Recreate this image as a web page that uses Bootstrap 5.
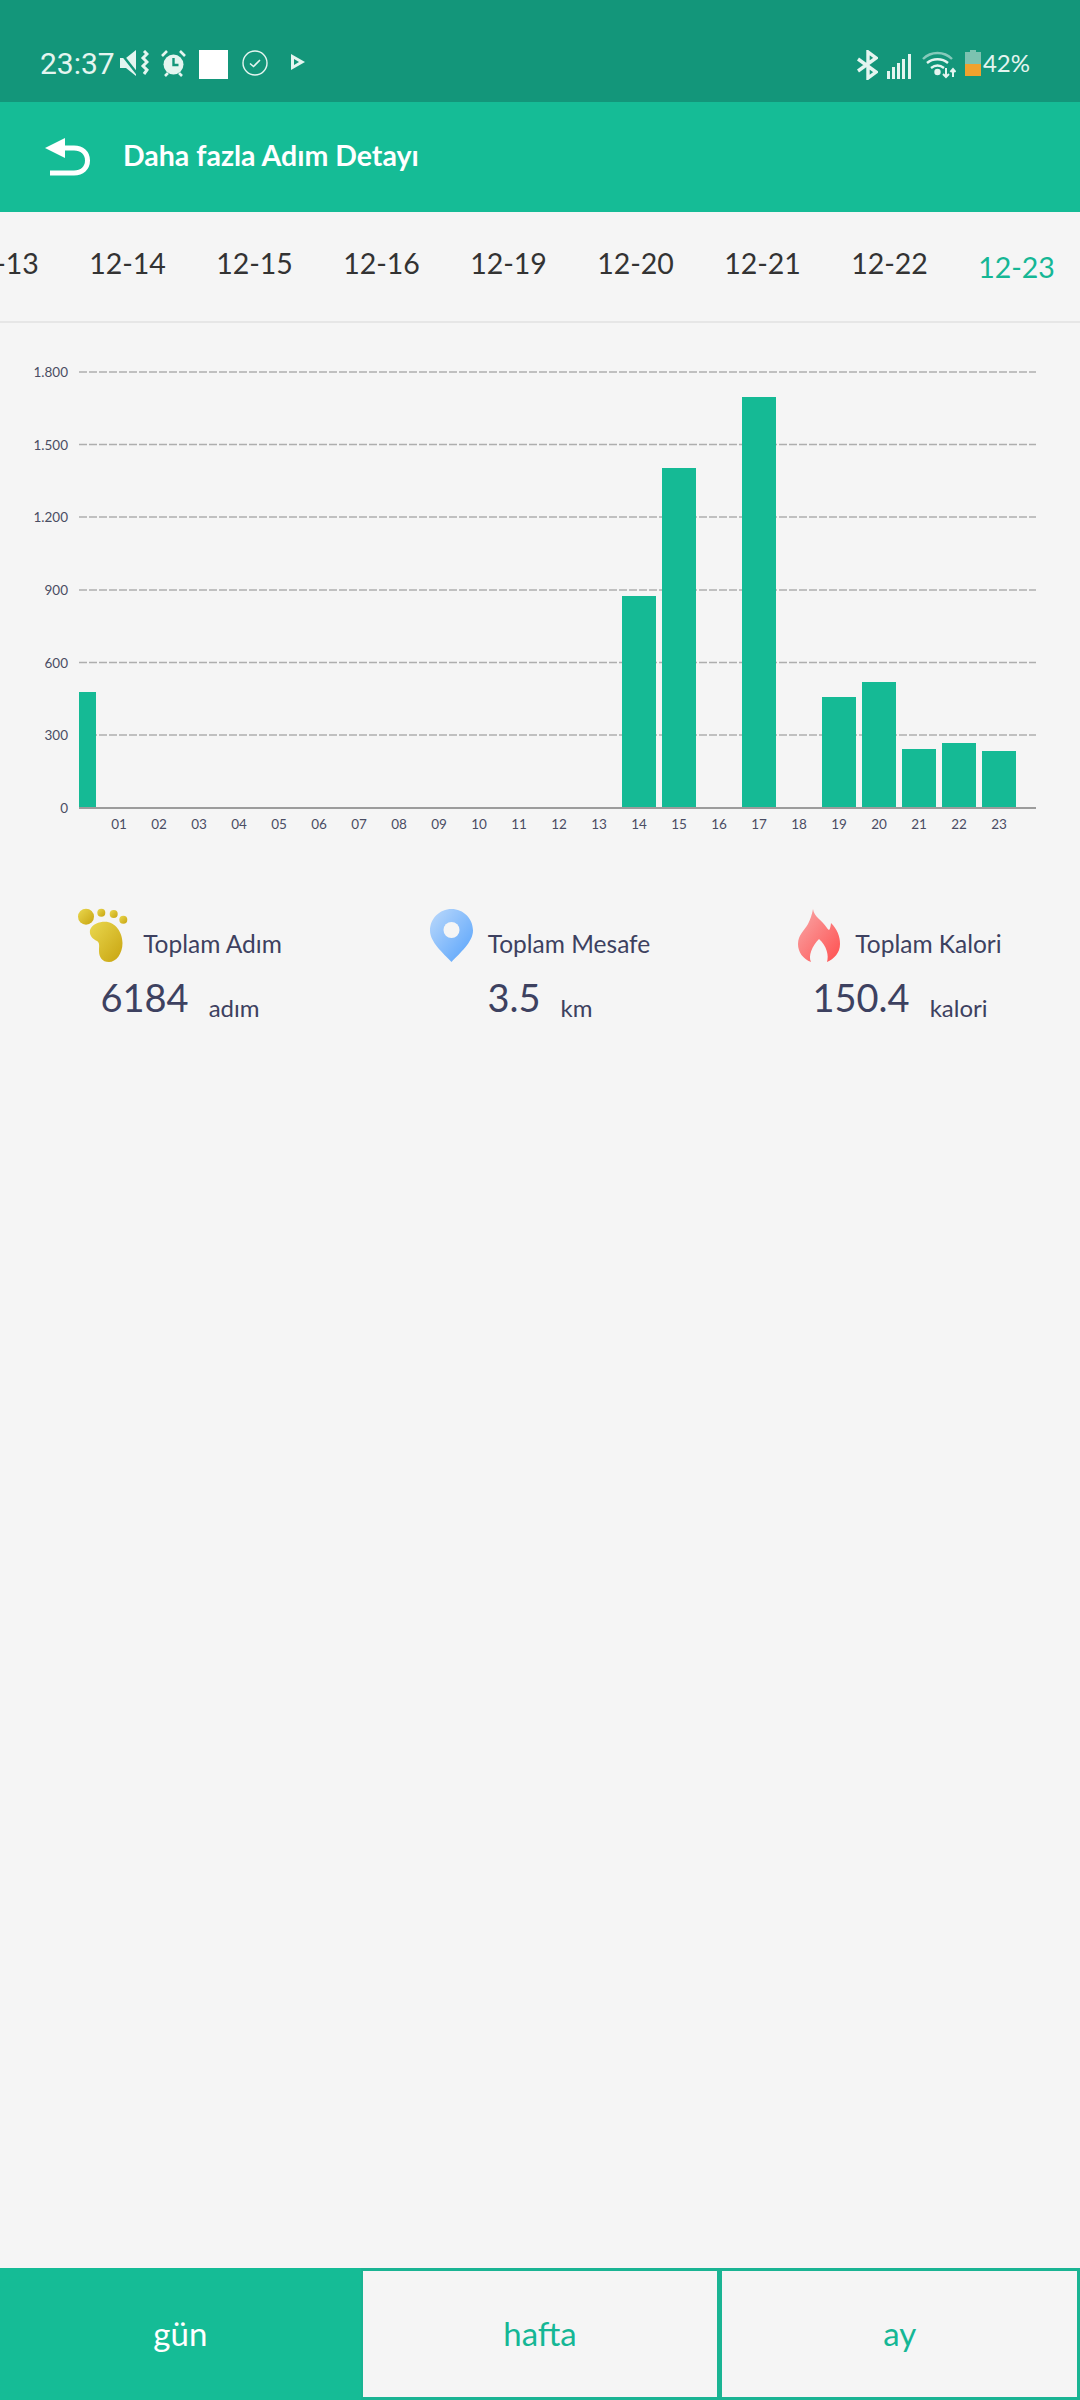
<!DOCTYPE html>
<html lang="tr">
<head>
  <meta charset="UTF-8">
  <title>Daha fazla Adım Detayı</title>
  <meta name="viewport" content="width=device-width, initial-scale=1.0">
  <link href="https://cdn.jsdelivr.net/npm/bootstrap@5.3.0/dist/css/bootstrap.min.css" rel="stylesheet">
  <style>
    body {
      background-color: #f5f5f5;
      font-family: Lato, "Noto Sans", sans-serif;
      height: 100vh;
    }

    /* status bar */
    .status-bar {
      background-color: #13967a;
      color: #e4f5f0;
      height: 102px;
      padding: 50px 50px 0 40px;
      font-family: Roboto, sans-serif;
    }
    .status-time { font-size: 30px; line-height: 28px; width: 73px; }
    .status-pct { font-family: Lato, sans-serif; font-size: 24px; line-height: 26px; margin-left: 2px; }
    .ic-mute { margin-left: 7px; }
    .ic-alarm { margin-left: 12px; }
    .ic-square { margin-left: 13px; width: 29px; height: 29px; background: #fff; }
    .ic-check { margin-left: 14px; }
    .ic-play { margin-left: 22px; }
    .ic-signal { margin-left: 9px; }
    .ic-wifi { margin-left: 11px; }
    .ic-batt { margin-left: 9px; }

    /* app bar */
    .app-bar {
      background-color: #15bc96;
      color: #fff;
      height: 110px;
      padding-left: 45px;
    }
    .app-title { font-size: 28.5px; font-weight: 700; margin-left: 33px; margin-bottom: 3px; }

    /* date strip */
    .date-strip {
      height: 111px;
      border-bottom: 2px solid #e6e6e6;
      font-size: 28.5px;
      color: #333;
    }
    .date-item { flex: 0 0 127px; text-align: center; padding-top: 30px; line-height: 42px; }
    .date-item:first-child { margin-left: -63px; }
    .date-item.is-current { color: #15b795; padding-top: 34px; }

    .chart-svg { display: block; width: 1080px; height: 537px; }
    .chart-svg text { font-family: Lato, sans-serif; font-size: 13.5px; fill: #4a4d63; }

    /* totals */
    .totals { margin-top: 48px; color: #3d4160; }
    .total-head { height: 54px; }
    .total-label { font-size: 24.5px; line-height: 30px; margin-left: 15px; margin-bottom: 3px; }
    .total-value { margin-top: 10px; line-height: 50px; }
    .total-num { font-size: 38px; }
    .total-unit { font-size: 24px; margin-left: 20px; position: relative; top: 5px; }

    /* day / week / month */
    .range-tabs { height: 132px; }
    .range-tabs .btn {
      --bs-btn-color: #15b795;
      --bs-btn-bg: #f5f5f5;
      --bs-btn-border-color: #1ab493;
      --bs-btn-active-color: #fff;
      --bs-btn-active-bg: #15bc96;
      --bs-btn-active-border-color: #15bc96;
      --bs-btn-border-width: 3px;
      --bs-btn-border-radius: 0;
      --bs-btn-font-size: 33px;
      width: 33.333%;
    }
  </style>
</head>
<body class="d-flex flex-column">

  <!-- Status bar -->
  <div class="status-bar d-flex align-items-start flex-shrink-0">
    <span class="status-time">23:37</span>
    <svg class="ic-mute" width="29" height="26" viewBox="0 0 29 26">
      <path d="M0 8h6l10-8v26L6 18H0z" fill="#e4f5f0"/>
      <path d="M0 2l19 24" stroke="#13967a" stroke-width="2.5" fill="none"/>
      <path d="M24 1l3 3-4 4 4 4-4 4 4 4-3 4" stroke="#e4f5f0" stroke-width="3" fill="none"/>
    </svg>
    <svg class="ic-alarm" width="25" height="27" viewBox="0 0 25 27">
      <circle cx="12.5" cy="14.5" r="10" fill="#e4f5f0"/>
      <path d="M12.5 8v7h5" stroke="#13967a" stroke-width="2.4" fill="none"/>
      <path d="M1 6l5-5M24 6l-5-5M4 26l3-3M21 26l-3-3" stroke="#e4f5f0" stroke-width="2.6" fill="none"/>
    </svg>
    <div class="ic-square"></div>
    <svg class="ic-check" width="26" height="26" viewBox="0 0 26 26" fill="none" stroke="#e4f5f0">
      <circle cx="13" cy="13" r="12" stroke-width="1.4"/>
      <path d="M8 13.5l3.5 3L18 10" stroke-width="1.6"/>
    </svg>
    <svg class="ic-play mt-1" width="15" height="16" viewBox="0 0 15 16">
      <path d="M1 0l14 8L1 16z" fill="#e4f5f0"/>
      <path d="M4 5l5 3-5 3z" fill="#13967a"/>
    </svg>
    <div class="ms-auto d-flex align-items-start">
      <svg width="21" height="30" viewBox="0 0 21 30" fill="none" stroke="#e4f5f0" stroke-width="3.4">
        <path d="M1 9l18 13-8 6V2l8 6L1 21"/>
      </svg>
      <svg class="ic-signal mt-1" width="24" height="25" viewBox="0 0 24 25" fill="#e4f5f0">
        <rect x="0" y="17" width="3" height="8"/>
        <rect x="5" y="13" width="3" height="12"/>
        <rect x="10" y="9" width="3" height="16"/>
        <rect x="15" y="5" width="3" height="20"/>
        <rect x="21" y="0" width="3" height="25"/>
      </svg>
      <svg class="ic-wifi" width="34" height="29" viewBox="0 0 34 29" fill="none" stroke="#e4f5f0" stroke-width="2.4">
        <path d="M1 9c8-8 21-8 29 0" stroke-opacity=".55"/>
        <path d="M5 13c6-5 15-5 21 0"/>
        <path d="M9 18c4-3 9-3 13 0"/>
        <circle cx="15.5" cy="22" r="2" fill="#e4f5f0"/>
        <path d="M24 18v9M21 24l3 3 3-3M31 27v-8M28.500 22l2.500-3 2.500 3" stroke-width="2"/>
      </svg>
      <svg class="ic-batt" width="16" height="26" viewBox="0 0 16 26">
        <path d="M5 0h6v2h5v12H0V2h5z" fill="#7cc2b0"/>
        <rect y="14" width="16" height="12" fill="#f0a22e"/>
      </svg>
      <span class="status-pct">42%</span>
    </div>
  </div>

  <!-- App bar -->
  <div class="app-bar d-flex align-items-center flex-shrink-0">
    <svg width="45" height="38" viewBox="0 0 45 38" fill="none">
      <path d="M0 10L20 0v20z" fill="#fff"/>
      <path d="M18 10H29C37 10 42.500 15 42.500 22.500C42.500 30 37 35 29 35H5" stroke="#fff" stroke-width="5"/>
    </svg>
    <h1 class="app-title">Daha fazla Adım Detayı</h1>
  </div>

  <!-- Dates -->
  <div class="date-strip d-flex overflow-hidden flex-shrink-0">
    <div class="date-item">12-13</div>
    <div class="date-item">12-14</div>
    <div class="date-item">12-15</div>
    <div class="date-item">12-16</div>
    <div class="date-item">12-19</div>
    <div class="date-item">12-20</div>
    <div class="date-item">12-21</div>
    <div class="date-item">12-22</div>
    <div class="date-item is-current">12-23</div>
  </div>

  <!-- Chart -->
  <svg class="chart-svg flex-shrink-0" id="stepChart" viewBox="0 323 1080 537"></svg>

  <!-- Totals -->
  <div class="totals row g-0 flex-shrink-0">
    <div class="col-4 d-flex flex-column align-items-center">
      <div class="total-head d-flex align-items-end">
        <svg width="50" height="54" viewBox="0 0 50 54">
          <defs>
            <linearGradient id="footFill" x1="0" y1="0" x2="1" y2="1">
              <stop offset="0" stop-color="#ead84f"/>
              <stop offset="1" stop-color="#c8a410"/>
            </linearGradient>
          </defs>
          <g fill="url(#footFill)">
            <circle cx="8" cy="8.700" r="8"/>
            <circle cx="23.300" cy="4.700" r="4"/>
            <circle cx="35.700" cy="6" r="4"/>
            <circle cx="45.300" cy="11.700" r="4"/>
            <path d="M12 22C14 16 21 13.700 27 13.700C37 13.700 44.500 24 44.500 35C44.500 46 38 54 31 54C24 54 21 49 21 43C21 38 22 35 19 33C15 31 11 28 12 22Z"/>
          </g>
        </svg>
        <p class="total-label">Toplam Adım</p>
      </div>
      <div class="total-value"><span class="total-num">6184</span><span class="total-unit">adım</span></div>
    </div>
    <div class="col-4 d-flex flex-column align-items-center">
      <div class="total-head d-flex align-items-end">
        <svg width="43" height="53" viewBox="0 0 43 53">
          <defs>
            <linearGradient id="pinFill" x1="0" y1="0" x2="1" y2="1">
              <stop offset="0" stop-color="#bcd9fb"/>
              <stop offset="1" stop-color="#55a2fb"/>
            </linearGradient>
          </defs>
          <path d="M21.500 0C33.400 0 43 9.600 43 21.500C43 33 30 44 21.500 53C13 44 0 33 0 21.500C0 9.600 9.600 0 21.500 0Z" fill="url(#pinFill)"/>
          <circle cx="21.500" cy="21" r="8" fill="#f5f5f5"/>
        </svg>
        <p class="total-label">Toplam Mesafe</p>
      </div>
      <div class="total-value"><span class="total-num">3.5</span><span class="total-unit">km</span></div>
    </div>
    <div class="col-4 d-flex flex-column align-items-center">
      <div class="total-head d-flex align-items-end">
        <svg width="42" height="53" viewBox="0 0 42 53">
          <defs>
            <linearGradient id="flameFill" x1="0" y1="0" x2="1" y2="1">
              <stop offset="0" stop-color="#f8a9a9"/>
              <stop offset="1" stop-color="#ff4f4f"/>
            </linearGradient>
          </defs>
          <path d="M15 0C16 8 24 11 29 19C31 22 32 22 33 14C39 20 42 27 42 35C42 44 36 50 29 53C31 47 29 37 21 30C14 37 10 47 13 53C5 50 0 43 0 35C0 26 6 22 10 15C12 11 14 6 15 0Z" fill="url(#flameFill)"/>
        </svg>
        <p class="total-label">Toplam Kalori</p>
      </div>
      <div class="total-value"><span class="total-num">150.4</span><span class="total-unit">kalori</span></div>
    </div>
  </div>

  <!-- Day / week / month -->
  <div class="range-tabs btn-group mt-auto flex-shrink-0" role="group">
    <button type="button" class="btn active">gün</button>
    <button type="button" class="btn">hafta</button>
    <button type="button" class="btn">ay</button>
  </div>

  <script src="https://cdn.jsdelivr.net/npm/bootstrap@5.3.0/dist/js/bootstrap.bundle.min.js"></script>
  <script>
    const svg = document.getElementById("stepChart");
    const NS = "http://www.w3.org/2000/svg";
    const axisY = 808, left = 79, right = 1036, step = 40, barW = 34;

    const add = (name, attrs, text) => {
      const el = document.createElementNS(NS, name);
      Object.entries(attrs).forEach(([k, v]) => el.setAttribute(k, v));
      if (text) el.textContent = text;
      svg.appendChild(el);
    };

    // gridlines + y labels
    const ticks = [["1.800", 372], ["1.500", 444.5], ["1.200", 517], ["900", 590], ["600", 662.5], ["300", 735], ["0", 808]];
    ticks.forEach(([label, y]) => {
      add("text", { x: 68, y: y + 5, "text-anchor": "end" }, label);
      if (label !== "0") {
        add("line", { x1: left, x2: right, y1: y, y2: y, stroke: "#aeaeae", "stroke-width": 1.5, "stroke-dasharray": "8 2" });
      }
    });

    // hour -> bar height in px
    const bars = { 14: 212, 15: 340, 17: 411, 19: 111, 20: 126, 21: 59, 22: 65, 23: 57 };
    add("rect", { x: left, y: axisY - 116, width: 17, height: 116, fill: "#15ba95" });
    Object.entries(bars).forEach(([hour, h]) => {
      add("rect", { x: left + hour * step - barW / 2, y: axisY - h, width: barW, height: h, fill: "#15ba95" });
    });

    add("line", { x1: left, x2: right, y1: axisY, y2: axisY, stroke: "#9c9c9c", "stroke-width": 2 });

    // x labels
    for (let hour = 1; hour <= 23; hour++) {
      add("text", { x: left + hour * step, y: 829, "text-anchor": "middle" }, String(hour).padStart(2, "0"));
    }
  </script>
</body>
</html>
